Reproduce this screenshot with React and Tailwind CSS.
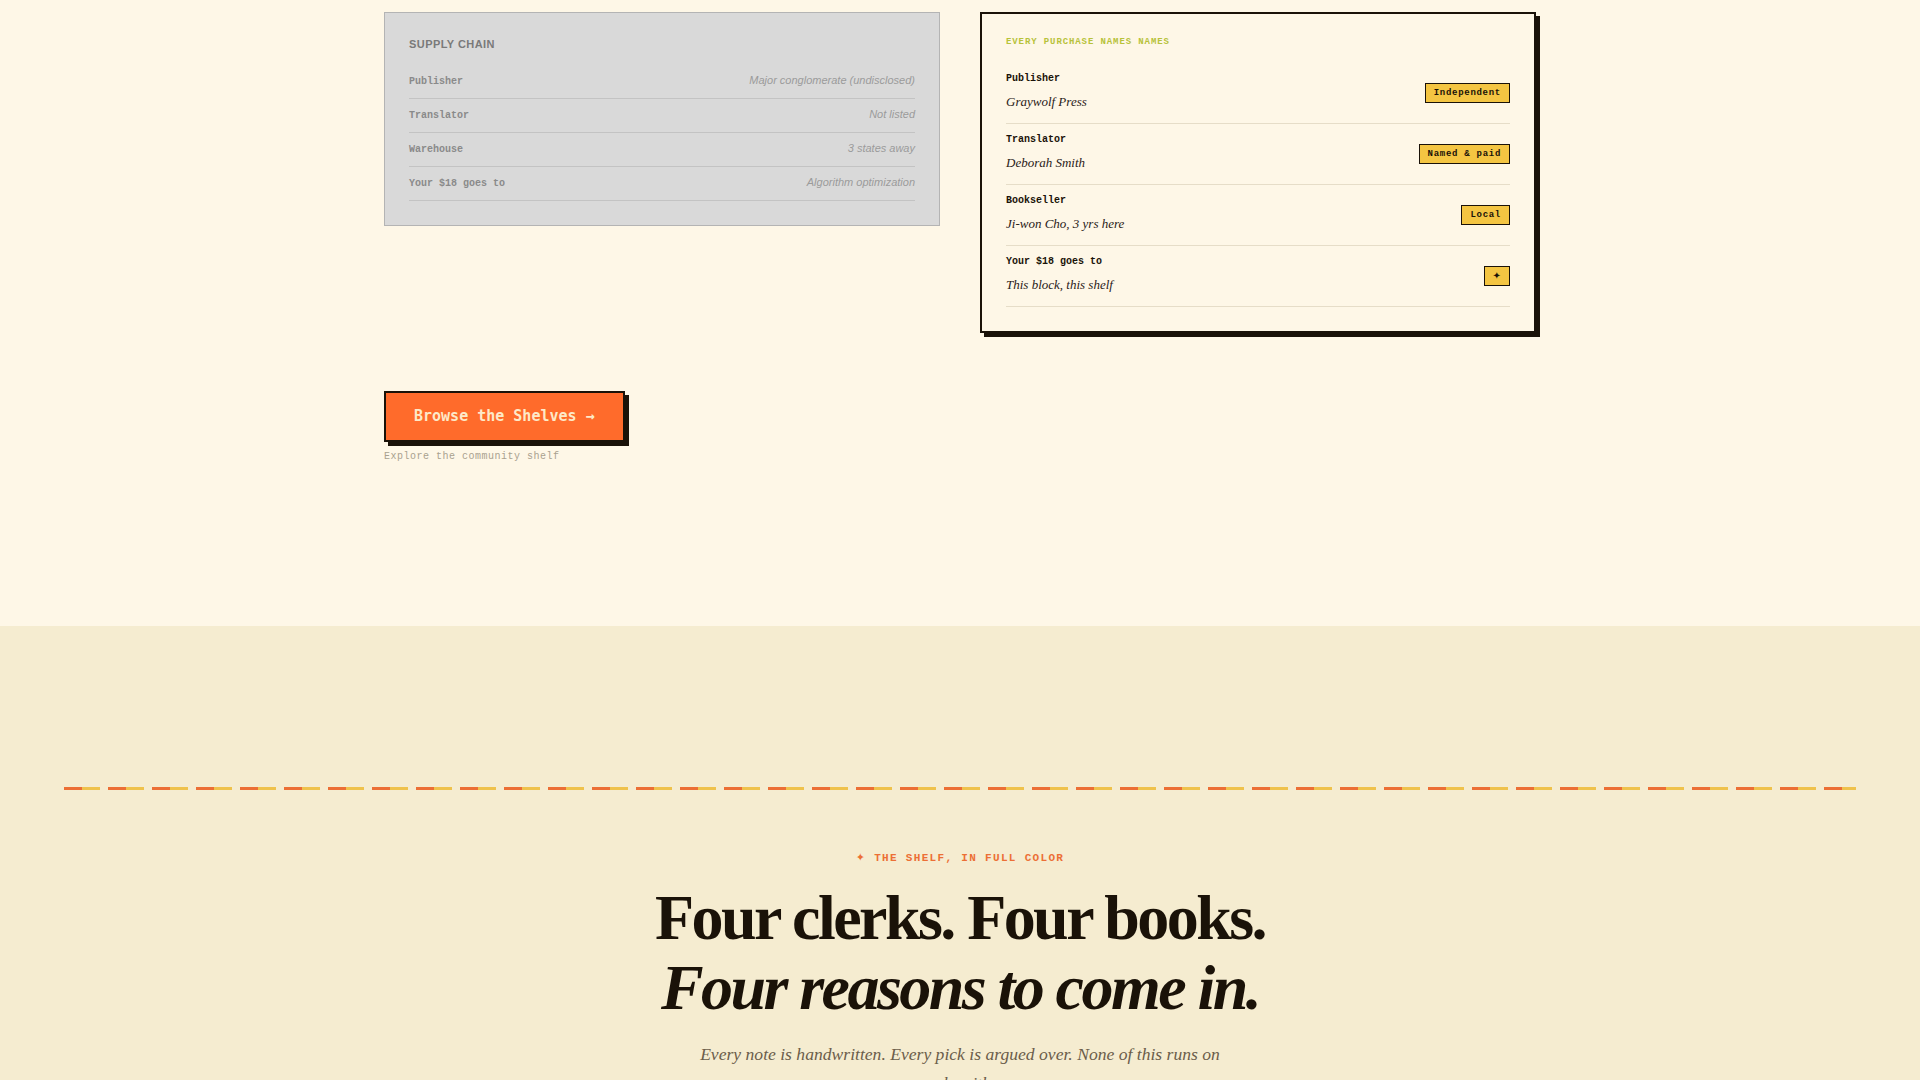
import React from "react";

const mono = "font-['Liberation_Mono','DejaVu_Sans_Mono',monospace]";
const monoBold = "font-['DejaVu_Sans_Mono','Liberation_Mono',monospace]";
const serif = "font-['Liberation_Serif','Times_New_Roman',serif]";
const sans = "font-['Liberation_Sans',Arial,sans-serif]";

const chain = [
  { label: "Publisher", value: "Major conglomerate (undisclosed)" },
  { label: "Translator", value: "Not listed" },
  { label: "Warehouse", value: "3 states away" },
  { label: "Your $18 goes to", value: "Algorithm optimization" },
];

const names = [
  { label: "Publisher", value: "Graywolf Press", tag: "Independent" },
  { label: "Translator", value: "Deborah Smith", tag: "Named & paid" },
  { label: "Bookseller", value: "Ji-won Cho, 3 yrs here", tag: "Local" },
  { label: "Your $18 goes to", value: "This block, this shelf", tag: "✦", star: true },
];

function SupplyChain() {
  return (
    <div className="border border-[#b4b4b4] bg-[#d9d9d9] p-6">
      <h3 className={`${sans} mb-[14px] text-[11px] font-bold uppercase leading-[14px] tracking-[0.04em] text-[#7a7a7a]`}>
        Supply Chain
      </h3>
      <ul>
        {chain.map((row) => (
          <li
            key={row.label}
            className="flex h-[34px] items-baseline justify-between border-b border-[#c3c3c3] pt-[7px] leading-[17px]"
          >
            <span className={`${mono} text-[10px] font-bold text-[#8a8a8a]`}>{row.label}</span>
            <span className={`${sans} text-[11px] italic text-[#9b9b9b]`}>{row.value}</span>
          </li>
        ))}
      </ul>
    </div>
  );
}

function NamedChain() {
  return (
    <div className="border-2 border-[#1a1208] bg-[#fef7e7] p-6 shadow-[4px_4px_0_#1a1208]">
      <h3 className={`${mono} mb-4 text-[9px] font-bold uppercase leading-[9px] tracking-[0.1em] text-[#b7c23a]`}>
        Every purchase names names
      </h3>
      <ul>
        {names.map((row) => (
          <li
            key={row.label}
            className="flex items-center justify-between border-b border-[#e6ddc8] pb-[11px] pt-[10px]"
          >
            <div>
              <div className={`${mono} text-[10px] font-bold leading-[12px] text-[#1a1208]`}>{row.label}</div>
              <div className={`${serif} mt-[7px] text-[13px] italic leading-[20px] text-[#2a2118]`}>{row.value}</div>
            </div>
            {row.star ? (
              <span className="border border-[#1a1208] bg-[#f4c542] px-[8px] py-[3px] font-['DejaVu_Sans',sans-serif] text-[10px] font-bold leading-[12px] text-[#1a1208]">
                {row.tag}
              </span>
            ) : (
              <span
                className={`${mono} border border-[#1a1208] bg-[#f4c542] px-2 py-[3px] text-[9px] font-bold leading-[12px] tracking-[0.08em] text-[#1a1208]`}
              >
                {row.tag}
              </span>
            )}
          </li>
        ))}
      </ul>
    </div>
  );
}

export default function App() {
  return (
    <div className="min-h-screen bg-[#f5ecd0]">
      <section className="bg-[#fef7e7] pb-[162px] pt-3">
        <div className="mx-auto max-w-6xl">
          <div className="grid grid-cols-2 items-start gap-10">
            <SupplyChain />
            <NamedChain />
          </div>

          <div className="mt-[58px]">
            <button
              className={`${monoBold} border-2 border-[#1a1208] bg-[#ff6b2b] px-7 py-3 text-[15px] font-bold leading-[23px] text-[#fde9c8] shadow-[4px_4px_0_#1a1208]`}
            >
              Browse the Shelves →
            </button>
            <p className={`${mono} mt-2 text-[10px] leading-[14px] tracking-[0.05em] text-[#a9a18f]`}>
              Explore the community shelf
            </p>
          </div>
        </div>
      </section>

      <section className="bg-[#f5ecd0] pb-24 pt-[161px]">
        <div className="mx-16 h-[3px] bg-[repeating-linear-gradient(90deg,#ec6f35_0_18px,#efc24c_18px_36px,transparent_36px_44px)]" />

        <div className="mt-[60px] flex flex-col items-center text-center">
          <p className={`${mono} text-[11px] font-bold uppercase leading-[16px] tracking-[0.12em] text-[#ec6f35]`}>
            <span className="font-['DejaVu_Sans',sans-serif]">✦</span> The shelf, in full color
          </p>
          <h2 className={`${serif} mt-[17px] text-[64px] font-bold leading-[1.1] tracking-[-0.04em] text-[#1a1208]`}>
            Four clerks. Four books.
            <br />
            <em>Four reasons to come in.</em>
          </h2>
          <p className={`${serif} mt-[16px] max-w-[530px] text-[17.6px] italic leading-[1.65] text-[#6b5d4a]`}>
            Every note is handwritten. Every pick is argued over. None of this runs on an algorithm.
          </p>
        </div>
      </section>
    </div>
  );
}
